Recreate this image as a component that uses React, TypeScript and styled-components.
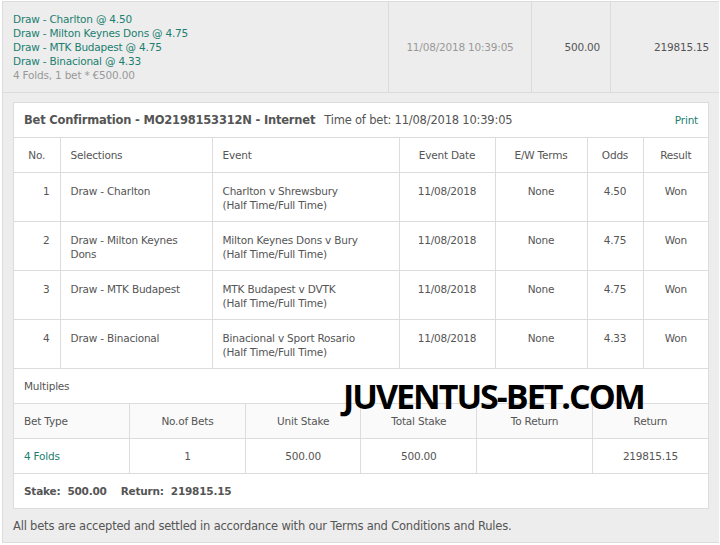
import React from "react";
import styled, { createGlobalStyle } from "styled-components";

const GlobalStyle = createGlobalStyle`
  body {
    margin: 0;
    background: #fff;
    font-family: "DejaVu Sans", Verdana, sans-serif;
    font-size: 10.5px;
    letter-spacing: -0.2px;
    color: #555;
  }
`;

const Outer = styled.div`
  margin: 1px 0 0 2px;
  width: 716px;
  border-left: 1px solid #dcdcdc;
  border-top: 1px solid #dcdcdc;
  background: #ededed;
`;

const SummaryRow = styled.div`
  display: grid;
  grid-template-columns: 385px 143px 79px 1fr;
  height: 90px;
  border-bottom: 1px solid #dcdcdc;
`;

const SummaryCell = styled.div<{ $align?: string }>`
  display: flex;
  flex-direction: column;
  justify-content: center;
  align-items: ${({ $align }) => $align || "flex-start"};
  padding: 0 10px;
  line-height: 14px;
  border-left: ${({ $align }) => ($align ? "1px solid #dcdcdc" : "none")};
  color: #555;
`;

const Pick = styled.div<{ $muted?: boolean }>`
  color: ${({ $muted }) => ($muted ? "#999" : "#1b7f70")};
`;

const Detail = styled.div`
  padding: 9px 10px 0 10px;
  height: 440px;
  border-bottom: 1px solid #dcdcdc;
`;

const Panel = styled.div`
  position: relative;
  background: #fff;
  border: 1px solid #dcdcdc;
`;

const PanelHead = styled.div`
  display: flex;
  align-items: center;
  height: 34px;
  padding: 0 10px;
  font-size: 11.5px;
  border-bottom: 1px solid #dcdcdc;
`;

const Ref = styled.span`
  font-weight: bold;
  margin-right: 9px;
`;

const PrintLink = styled.a`
  margin-left: auto;
  color: #1b7f70;
  font-size: 10.5px;
  text-decoration: none;
`;

const Table = styled.table`
  width: 100%;
  border-collapse: collapse;
  table-layout: fixed;
`;

const Th = styled.th<{ $align?: string; $shade?: boolean }>`
  height: ${({ $shade }) => ($shade ? "35px" : "34px")};
  padding: 0 10px;
  font-weight: normal;
  text-align: ${({ $align }) => $align || "center"};
  background: ${({ $shade }) => ($shade ? "#fafafa" : "#fff")};
  border: 1px solid #dcdcdc;
  border-top: none;
  box-sizing: border-box;
  &:first-child { border-left: none; }
  &:last-child { border-right: none; }
`;

const Td = styled.td<{ $align?: string; $green?: boolean; $tall?: boolean }>`
  height: ${({ $tall }) => ($tall ? "49px" : "35px")};
  padding: ${({ $tall }) => ($tall ? "11px 10px 0" : "0 10px")};
  vertical-align: ${({ $tall }) => ($tall ? "top" : "middle")};
  line-height: 14px;
  text-align: ${({ $align }) => $align || "center"};
  color: ${({ $green }) => ($green ? "#1b7f70" : "#555")};
  border: 1px solid #dcdcdc;
  border-top: none;
  box-sizing: border-box;
  &:first-child { border-left: none; }
  &:last-child { border-right: none; }
`;

const Section = styled.div`
  height: 34px;
  display: flex;
  align-items: center;
  padding: 0 10px;
  border-bottom: 1px solid #dcdcdc;
`;

const Totals = styled.div`
  height: 34px;
  display: flex;
  align-items: center;
  gap: 14px;
  padding: 0 10px;
  font-weight: bold;
`;

const Footnote = styled.div`
  padding: 10px 0 0 0;
  line-height: 14px;
  font-size: 11.5px;
`;

const Watermark = styled.div`
  position: absolute;
  left: 329px;
  top: 270px;
  font-family: "Open Sans", sans-serif;
  font-weight: bold;
  font-size: 34px;
  letter-spacing: -2px;
  color: #000;
  white-space: nowrap;
  pointer-events: none;
`;

const selections = [
  ["1", "Draw - Charlton", "Charlton v Shrewsbury", "4.50"],
  ["2", "Draw - Milton Keynes Dons", "Milton Keynes Dons v Bury", "4.75"],
  ["3", "Draw - MTK Budapest", "MTK Budapest v DVTK", "4.75"],
  ["4", "Draw - Binacional", "Binacional v Sport Rosario", "4.33"],
];

const App: React.FC = () => (
  <>
    <GlobalStyle />
    <Outer>
      <SummaryRow>
        <SummaryCell>
          <Pick>Draw - Charlton @ 4.50</Pick>
          <Pick>Draw - Milton Keynes Dons @ 4.75</Pick>
          <Pick>Draw - MTK Budapest @ 4.75</Pick>
          <Pick>Draw - Binacional @ 4.33</Pick>
          <Pick $muted>4 Folds, 1 bet * €500.00</Pick>
        </SummaryCell>
        <SummaryCell $align="center">
          <Pick $muted>11/08/2018 10:39:05</Pick>
        </SummaryCell>
        <SummaryCell $align="flex-end">500.00</SummaryCell>
        <SummaryCell $align="flex-end">219815.15</SummaryCell>
      </SummaryRow>
      <Detail>
        <Panel>
          <PanelHead>
            <Ref>Bet Confirmation - MO2198153312N - Internet</Ref>
            Time of bet: 11/08/2018 10:39:05
            <PrintLink href="#">Print</PrintLink>
          </PanelHead>
          <Table>
            <colgroup>
              <col style={{ width: 46 }} />
              <col style={{ width: 152 }} />
              <col style={{ width: 187 }} />
              <col style={{ width: 96 }} />
              <col style={{ width: 92 }} />
              <col style={{ width: 56 }} />
              <col />
            </colgroup>
            <thead>
              <tr>
                <Th>No.</Th>
                <Th $align="left">Selections</Th>
                <Th $align="left">Event</Th>
                <Th>Event Date</Th>
                <Th>E/W Terms</Th>
                <Th>Odds</Th>
                <Th>Result</Th>
              </tr>
            </thead>
            <tbody>
              {selections.map(([no, sel, ev, odds]) => (
                <tr key={no}>
                  <Td $tall $align="right">{no}</Td>
                  <Td $tall $align="left">{sel}</Td>
                  <Td $tall $align="left">
                    {ev}
                    <br />
                    (Half Time/Full Time)
                  </Td>
                  <Td $tall>11/08/2018</Td>
                  <Td $tall>None</Td>
                  <Td $tall>{odds}</Td>
                  <Td $tall>Won</Td>
                </tr>
              ))}
            </tbody>
          </Table>
          <Section>Multiples</Section>
          <Table>
            <thead>
              <tr>
                <Th $shade $align="left">Bet Type</Th>
                <Th $shade>No.of Bets</Th>
                <Th $shade>Unit Stake</Th>
                <Th $shade>Total Stake</Th>
                <Th $shade>To Return</Th>
                <Th $shade>Return</Th>
              </tr>
            </thead>
            <tbody>
              <tr>
                <Td $align="left" $green>4 Folds</Td>
                <Td>1</Td>
                <Td>500.00</Td>
                <Td>500.00</Td>
                <Td></Td>
                <Td>219815.15</Td>
              </tr>
            </tbody>
          </Table>
          <Totals>
            <span>Stake:&nbsp; 500.00</span>
            <span>Return:&nbsp; 219815.15</span>
          </Totals>
          <Watermark>JUVENTUS-BET.COM</Watermark>
        </Panel>
        <Footnote>
          All bets are accepted and settled in accordance with our Terms and Conditions and Rules.
        </Footnote>
      </Detail>
    </Outer>
  </>
);

export default App;
